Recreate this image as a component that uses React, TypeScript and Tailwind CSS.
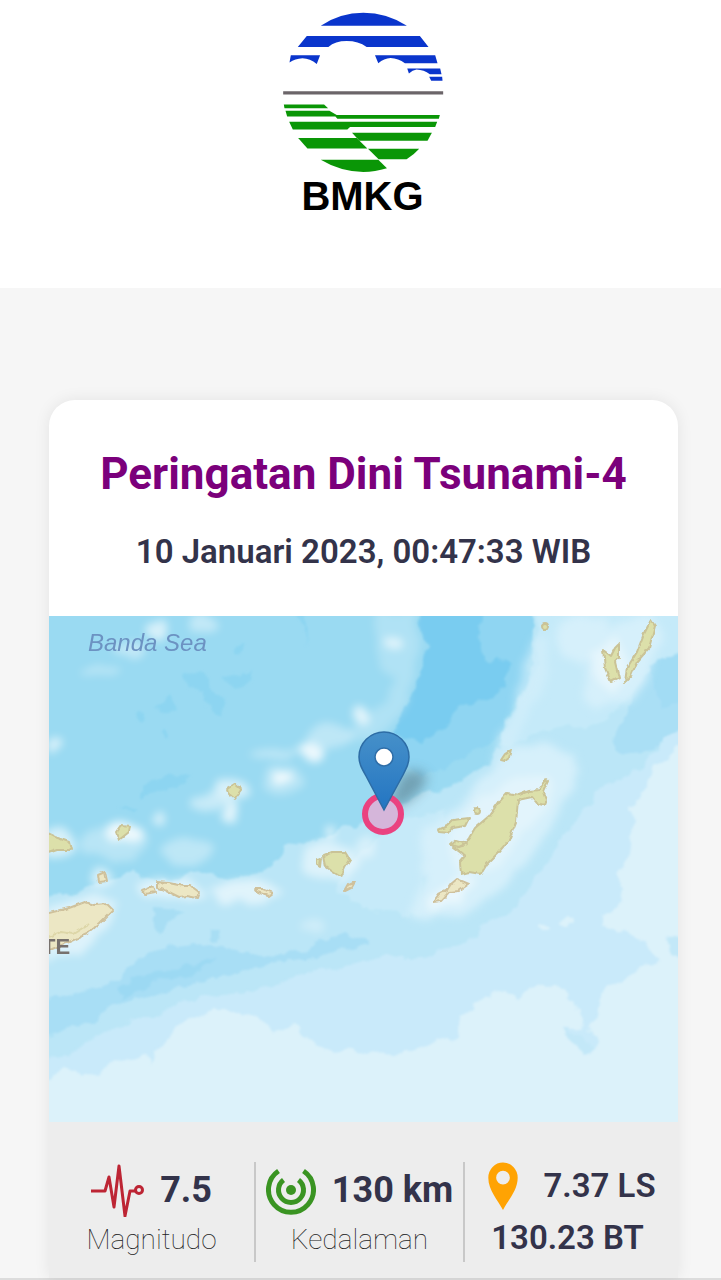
import type { ReactNode } from "react";

interface StatProps {
  icon: ReactNode;
  value: string;
  label: string;
}

function Logo() {
  return (
    <svg viewBox="36 36 486 484" className="w-[162px] h-[161px]" role="img" aria-label="Logo BMKG">
      <g fill="#0a35cc">
        <path d="M152 77Q210 38 280 38Q350 38 411 77Z" />
        <path d="M110 108H450L476 141H290Q265 123 230 123Q195 123 175 141H83Z" />
        <path d="M62 166H150L140 192Q120 176 97 175Q75 176 58 188Z" />
        <path d="M315 166H496L503 190H405Q385 175 362 174Q342 175 325 190Z" />
        <path d="M412 206H511L515 223H480Q462 210 440 209Q428 210 417 221Z" />
        <path d="M478 231H517L518 243H484Z" />
      </g>
      <path d="M39 274H520V284H39Z" fill="#6b6569" />
      <g fill="#0a9606">
        <path d="M41 314H162L174 325H43Z" />
        <path d="M46 333H178L200 346H510L507 357H202L196 350H51Z" />
        <path d="M57 366H502L496 382H240L232 389H68Z" />
        <path d="M246 399H486L473 423H268Z" />
        <path d="M84 415H260L292 446H112Z" />
        <path d="M294 447H448Q432 465 410 479H326Z" />
        <path d="M152 480H325L351 506Q315 517 280 517Q210 515 152 480Z" />
      </g>
    </svg>
  );
}

function QuakeMap() {
  return (
    <svg viewBox="0 0 629 506" className="block w-full h-auto" role="img" aria-label="Peta lokasi gempa">
      <defs>
        <filter id="haze" x="-10%" y="-10%" width="120%" height="120%">
          <feTurbulence type="fractalNoise" baseFrequency="0.05" numOctaves="2" seed="4" result="noise" />
          <feDisplacementMap in="SourceGraphic" in2="noise" scale="14" xChannelSelector="R" yChannelSelector="G" />
          <feGaussianBlur stdDeviation="4" />
        </filter>
        <filter id="soft" x="-10%" y="-10%" width="120%" height="120%">
          <feTurbulence type="fractalNoise" baseFrequency="0.06" numOctaves="3" seed="7" result="noise" />
          <feDisplacementMap in="SourceGraphic" in2="noise" scale="14" xChannelSelector="R" yChannelSelector="G" />
          <feGaussianBlur stdDeviation="1" />
        </filter>
        <filter id="coast" x="-10%" y="-10%" width="120%" height="120%">
          <feTurbulence type="fractalNoise" baseFrequency="0.15" numOctaves="2" seed="2" result="noise" />
          <feDisplacementMap in="SourceGraphic" in2="noise" scale="4" xChannelSelector="R" yChannelSelector="G" />
        </filter>
        <filter id="shadow" x="-50%" y="-50%" width="200%" height="200%">
          <feGaussianBlur stdDeviation="6" />
        </filter>
        <linearGradient id="pin" x1="0" y1="0" x2="0" y2="1">
          <stop offset="0" stopColor="#4690c9" />
          <stop offset="1" stopColor="#2375c2" />
        </linearGradient>
      </defs>

      <rect width="629" height="506" fill="#9adaf2" />

      {/* deep basin and darker patches */}
      <g filter="url(#soft)">
        <path d="M430 -10H486L480 60L464 90L454 118L430 134L400 150L372 160L352 150L350 120L390 100Z" fill="#8fd5f2" />
        <path d="M368 -10H436L430 20L434 44L442 48L450 40L460 50L458 72L430 86L410 94L392 116L372 127L346 118L351 100L368 70L379 30Z" fill="#79ccf0" />
        <path d="M136 60L150 54L162 70L174 84L176 98L166 98L152 74L140 72ZM172 64L194 58L202 54L200 66L184 70ZM106 90L122 80L126 94L114 98ZM92 170L110 161L140 162L130 170L110 173L92 180ZM66 186L90 194L86 198ZM186 32L196 28L190 38ZM246 -5H254L258 26Z" fill="#8dd5f1" />
        <circle cx="93" cy="102" r="4" fill="#8dd5f1" />
        <circle cx="115" cy="117" r="3" fill="#8dd5f1" />
      </g>

      {/* shelf around the eastern islands */}
      <g filter="url(#soft)">
        <path d="M-15 284L20 278L60 264L84 256L110 265L140 256L180 262L220 252L236 232L262 226L282 220L310 206L340 196L360 182L400 170L430 156L448 136L460 104L472 80L484 50L484 -10H644V521H-15Z" fill="#bbe6f7" />
        <path d="M488 -10H644V30L600 60L560 100L540 112L520 110L490 116L460 130L452 128L466 96L478 70L490 50Z" fill="#c5eaf9" />
        <path d="M594 60L644 36V110L590 140L566 134L568 110L580 90Z" fill="#aadff5" />
        <path d="M600 50L644 30V80L610 92Z" fill="#a2dcf4" />
        <path d="M340 214L370 200L400 196L376 262L372 300L330 296L290 276L296 250Z" fill="#c6eaf9" />
      </g>
      <g filter="url(#haze)" fill="#d6f0fb">
        <path d="M378 215L420 180L446 150L470 128L496 126L526 140L524 170L506 206L486 240L448 276L420 296L376 304L356 296L376 262L372 236Z" />
        <path d="M508 4L556 0L560 40L530 50L512 40ZM540 50L560 10L600 -5L614 20L600 56L584 84L548 92L532 76Z" />
        <path d="M484 20L500 20L498 60L478 100L458 140L450 160L444 140L466 90Z" opacity=".6" />
      </g>

      {/* trench */}
      <g filter="url(#soft)">
        <path d="M-15 386L30 376L62 368L84 348L106 334L134 331L164 328L192 336L230 339L262 332L296 317L318 326L318 330L262 340L196 354L130 371L70 388L46 404L-15 422Z" fill="#a8def5" />
        <path d="M68 370L100 360L124 352L166 344L140 360L104 366L72 384Z" fill="#9cd9f3" />
        <path d="M104 292L134 294L120 306L112 318L104 310ZM162 314H172L170 324L162 322Z" fill="#a8def4" />
      </g>

      {/* southern slope */}
      <g filter="url(#soft)">
        <path d="M-15 454L30 432L58 416L84 402L108 402L132 384L196 376L262 358L296 350L318 346L338 340L374 342L420 322L468 290L494 252L520 212L550 176L590 150L644 100V521H-15Z" fill="#c9eafa" />
      </g>
      <g filter="url(#soft)">
        <path d="M-15 474L4 460L16 452L24 454L32 462L49 460L58 452L66 443L84 445L96 439L103 448L106 436L114 424L129 411L159 396L193 396L210 403L226 414L244 410L260 422L282 436L298 431L313 438L361 437L378 427L390 421L404 427L411 401L441 377L471 381L488 367L514 376L531 394L534 414L515 414L524 428L545 437L547 420L538 414L548 404L554 377L598 349L611 344L591 324L554 309L554 301L574 287L576 270L570 258L580 240L584 194L604 154L644 115V521H-15Z" fill="#dcf2fa" />
        <path d="M618 324L634 320V344L622 336Z" fill="#c3e8f8" />
        <path d="M516 414L534 422L545 434L536 437L522 428Z" fill="#c3e8f8" />
        <ellipse cx="518" cy="305" rx="6" ry="4" fill="#dcf2fa" />
        <ellipse cx="496" cy="311" rx="5" ry="3" fill="#dcf2fa" />
      </g>

      {/* shallow water */}
      <g fill="#ffffff" filter="url(#haze)">
        <ellipse cx="108" cy="14" rx="10" ry="10" opacity=".6" />
        <ellipse cx="154" cy="8" rx="14" ry="8" opacity=".4" />
        <ellipse cx="80" cy="34" rx="14" ry="6" opacity=".4" />
        <ellipse cx="50" cy="54" rx="20" ry="6" opacity=".3" />
        <ellipse cx="4" cy="130" rx="6" ry="8" opacity=".6" />
        <path d="M326 -5L364 -5L374 30L364 70L350 100L324 124L296 128L300 112L336 88L346 64L330 50L328 30Z" opacity=".22" />
        <ellipse cx="344" cy="28" rx="9" ry="8" opacity=".6" />
        <ellipse cx="262" cy="136" rx="14" ry="8" opacity=".8" />
        <ellipse cx="225" cy="138" rx="26" ry="5" opacity=".35" />
        <ellipse cx="280" cy="120" rx="22" ry="12" opacity=".35" />
        <ellipse cx="312" cy="100" rx="8" ry="8" opacity=".7" />
        <ellipse cx="233" cy="161" rx="9" ry="8" opacity=".8" />
        <ellipse cx="234" cy="164" rx="20" ry="15" opacity=".3" />
        <ellipse cx="184" cy="174" rx="18" ry="10" opacity=".6" />
        <ellipse cx="160" cy="186" rx="20" ry="9" opacity=".45" />
        <ellipse cx="181" cy="196" rx="7" ry="10" opacity=".7" />
        <ellipse cx="108" cy="204" rx="7" ry="6" opacity=".6" />
        <ellipse cx="76" cy="217" rx="20" ry="10" opacity=".75" />
        <ellipse cx="66" cy="226" rx="34" ry="18" opacity=".3" />
        <ellipse cx="138" cy="236" rx="24" ry="14" opacity=".35" />
        <ellipse cx="282" cy="216" rx="6" ry="8" opacity=".7" />
        <ellipse cx="316" cy="230" rx="10" ry="12" opacity=".4" />
        <ellipse cx="280" cy="246" rx="30" ry="18" opacity=".5" />
        <ellipse cx="8" cy="228" rx="18" ry="14" opacity=".6" />
        <ellipse cx="53" cy="262" rx="10" ry="10" opacity=".6" />
        <path d="M-4 290L40 278L70 288L60 310L30 336L-4 346Z" opacity=".5" />
        <path d="M84 264L140 262L160 280L130 284L96 282Z" opacity=".55" />
        <path d="M160 270L200 264L236 276L216 284L172 288Z" opacity=".55" />
        <ellipse cx="262" cy="310" rx="12" ry="6" opacity=".3" />
        <path d="M378 284L404 264L430 262L410 284L386 298Z" opacity=".5" />
        <path d="M398 220L416 196L440 178L470 160L500 160L502 186L476 212L452 250L410 262Z" opacity=".3" />
        <path d="M540 36L570 20L580 60L566 74L548 66Z" opacity=".4" />
      </g>

      {/* islands */}
      <g filter="url(#coast)" strokeWidth="2" strokeLinejoin="round">
        <g fill="#dce0aa" stroke="#cac397">
          <path d="M426 212L440 200L450 186L458 177L470 179L480 175L490 174L497 163L499 165L494 176L497 184L495 189L488 187L483 181L469 184L467 206L460 224L448 238L438 248L432 258L420 256L412 258L411 246L416 240L404 231L414 230L420 222Z" />
          <path d="M389 214L398 210L404 204L420 202L416 210L404 212L400 217L390 216Z" />
          <circle cx="428" cy="195" r="3" />
          <path d="M402 229L408 224L418 227L410 231Z" />
          <path d="M452 144L456 138L462 134L460 142L456 145Z" />
          <path d="M554 34L562 40L566 32L570 28V42L566 46L570 62L562 66L556 52Z" />
          <path d="M602 4L606 10L600 32L588 46L582 60L576 66L578 52L588 36L594 20Z" />
          <circle cx="496" cy="10" r="3" />
          <path d="M178 173L186 168L193 174L186 183L180 178Z" />
          <path d="M67 216L72 209L81 210L80 216L70 224Z" />
          <path d="M-4 216L6 221L20 226L22 234L8 234L-4 238Z" />
          <path d="M274 240L284 236L296 236L301 244L296 252L292 261L284 256L276 250Z" />
          <path d="M268 243L272 242L271 251L268 249Z" />
        </g>
        <g fill="#ece7c4" stroke="#cfc19c">
          <path d="M-4 298L20 292L36 286L46 289L58 288L64 294L50 308L38 318L20 326L-4 336Z" />
          <path d="M108 266L120 267L134 270L142 270L150 276L148 282L138 280L130 281L116 274L108 272Z" />
          <path d="M93 274L104 270L106 276L96 278Z" />
          <path d="M49 259L56 256L58 265L50 266Z" />
          <path d="M206 273L214 273L224 277L220 280L208 276Z" />
          <path d="M296 275L300 268L306 265L302 272Z" />
          <path d="M384 286L390 278L398 274L402 268L408 263L420 268L410 275L400 276L392 285Z" />
        </g>
        <path d="M-4 322L12 316L24 318L40 308" fill="none" stroke="#ddd6a8" />
      </g>

      <text x="39" y="35" fontSize="24" fontStyle="italic" fill="#6c92c2" className="font-['Liberation_Sans',sans-serif]">
        Banda Sea
      </text>
      <text x="-7" y="338" fontSize="22" fontWeight="bold" fill="#77716d" className="font-['Liberation_Sans',sans-serif]">
        TE
      </text>

      {/* epicentre */}
      <path d="M338 190L352 160Q364 148 378 160Q376 176 352 190Z" fill="#4b6a78" opacity=".5" filter="url(#shadow)" />
      <circle cx="334" cy="198" r="18" fill="#d5b6da" stroke="#ea4280" strokeWidth="6" />
      <path
        d="M335 194L317 160C312 151 310 147 310 141A25 25 0 0 1 360 141C360 147 358 151 354 159Z"
        fill="url(#pin)"
        stroke="#2d6ca5"
        strokeWidth="1.5"
      />
      <circle cx="335" cy="141" r="9" fill="#ffffff" stroke="#2f6ea8" strokeWidth="1.5" />
    </svg>
  );
}

function PulseIcon() {
  return (
    <svg viewBox="0 0 53 54" className="w-[53px] h-[54px]" fill="none" stroke="#bd2534" strokeWidth="3" strokeLinejoin="round" aria-hidden="true">
      <path d="M0 28H14L18 14L23 44L28 3L34 53L39 28H44" />
      <circle cx="48" cy="27" r="3.5" />
    </svg>
  );
}

function DepthIcon() {
  return (
    <svg viewBox="0 0 50 50" className="w-[50px] h-[50px]" fill="none" stroke="#3a9422" strokeWidth="5" aria-hidden="true">
      <path d="M12.500 6A22.500 22.500 0 1 0 37.500 6" />
      <path d="M17.500 15A12.500 12.500 0 1 0 32.500 15" />
      <circle cx="25" cy="25" r="5" fill="#3a9422" stroke="none" />
    </svg>
  );
}

function PlaceIcon() {
  return (
    <svg viewBox="0 0 32 49" className="w-8 h-12" aria-hidden="true">
      <path
        fillRule="evenodd"
        fill="#ffa303"
        d="M16 49C11 39 1 29 1 16A15 15.500 0 0 1 31 16C31 29 21 39 16 49ZM16 9A7 7 0 1 0 16 23A7 7 0 1 0 16 9Z"
      />
    </svg>
  );
}

function Stat({ icon, value, label }: StatProps) {
  return (
    <div className="flex flex-col items-center border-r-2 border-[#c8c8c8]">
      <div className="flex h-14 items-center gap-4">
        {icon}
        <span className="text-[36px] leading-10 font-bold">{value}</span>
      </div>
      <span className="mt-1 text-[28px] leading-9 font-thin text-[#222222]">{label}</span>
    </div>
  );
}

export default function App() {
  return (
    <div className="bg-[#f6f6f6] font-[Roboto,sans-serif] text-[#33334a]">
      <header className="flex flex-col items-center bg-white pt-3 pb-[72px] pl-1">
        <Logo />
        <p className="mt-[3px] text-[40px] leading-10 font-bold text-black font-['Liberation_Sans',sans-serif]">BMKG</p>
      </header>

      <main className="border-b-2 border-[#dcdcdc] pt-28 pr-[43px] pl-[49px]">
        <article className="overflow-hidden rounded-t-[26px] bg-white shadow-[0_0_16px_rgba(0,0,0,0.08)]">
          <div className="pt-[50px] pb-11 text-center">
            <h1 className="text-[44px] leading-[48px] font-bold text-[#7b007b]">Peringatan Dini Tsunami-4</h1>
            <p className="mt-[34px] text-[33px] leading-10 font-semibold">10 Januari 2023, 00:47:33 WIB</p>
          </div>

          <QuakeMap />

          <div className="grid grid-cols-[207fr_209fr_213fr] bg-[#ededed] pt-10 pb-4">
            <Stat icon={<PulseIcon />} value="7.5" label="Magnitudo" />
            <Stat icon={<DepthIcon />} value="130 km" label="Kedalaman" />
            <div className="flex flex-col items-center text-[33px] leading-10 font-semibold">
              <div className="flex h-12 items-center gap-6">
                <PlaceIcon />
                <span>7.37 LS</span>
              </div>
              <span className="mt-2 pr-2 pb-1">130.23 BT</span>
            </div>
          </div>
        </article>
      </main>
    </div>
  );
}
